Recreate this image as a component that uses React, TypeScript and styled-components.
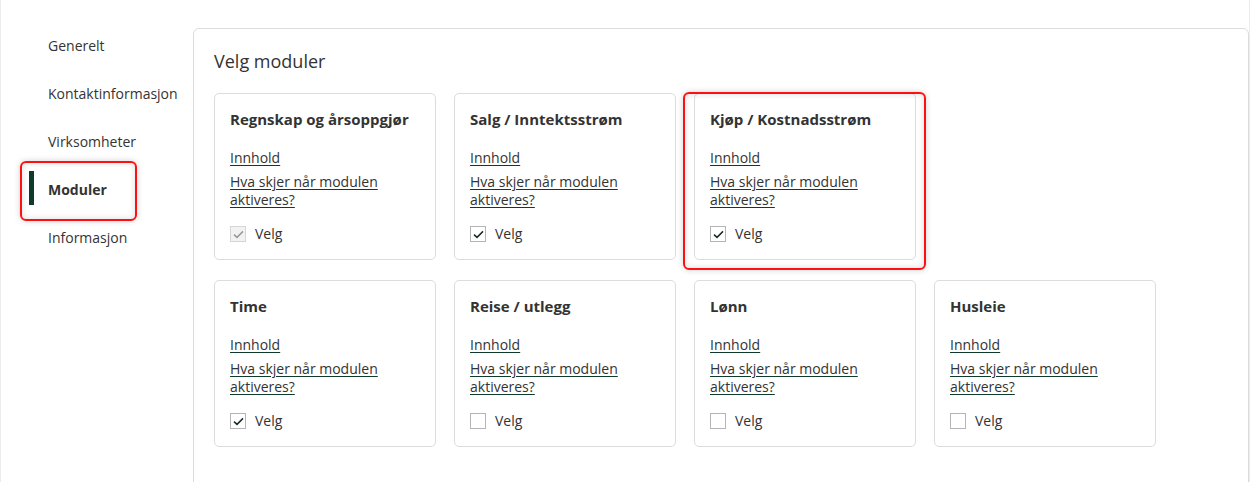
import React from "react";
import styled, { createGlobalStyle, css } from "styled-components";

const Global = createGlobalStyle`
  html, body { margin: 0; padding: 0; background: #fff; }
  body { font-family: "Open Sans", "Noto Sans", Arial, sans-serif; color: #333; overflow: hidden; }
  * { box-sizing: border-box; }
`;

const Shell = styled.div`
  display: flex;
  margin: -6px 0 0 0;
  border: 1px solid #ececec;
  border-radius: 8px;
  height: 540px;
  padding-top: 6px;
`;

const Sidebar = styled.nav`
  width: 192px;
  flex-shrink: 0;
  display: flex;
  flex-direction: column;
  padding-top: 20px;
`;

const NavItem = styled.div<{ $active?: boolean }>`
  position: relative;
  height: 48px;
  display: flex;
  align-items: center;
  padding-left: 47px;
  font-size: 14px;
  color: #333;
  ${(p) =>
    p.$active &&
    css`
      font-weight: 700;
      &::before {
        content: "";
        position: absolute;
        left: 28px;
        top: 6px;
        width: 5px;
        height: 34px;
        background: #0f3a2c;
      }
      &::after {
        content: "";
        position: absolute;
        left: 19px;
        top: -4px;
        width: 113px;
        height: 56px;
        border: 2px solid #ff1010;
        border-radius: 6px;
        box-shadow: 0 0 6px rgba(0, 0, 0, 0.18), inset 0 0 6px rgba(0, 0, 0, 0.14);
      }
    `}
`;

const Panel = styled.main`
  flex: 1;
  margin-top: 27px;
  border: 1px solid #dcdcdc;
  border-radius: 6px;
  padding: 20px 20px 0 20px;
`;

const Title = styled.h2`
  margin: 0 0 20px 0;
  font-size: 18px;
  font-weight: 400;
  line-height: 24px;
  color: #333;
`;

const Rows = styled.div`
  display: flex;
  flex-direction: column;
  gap: 20px;
`;

const Row = styled.div`
  display: grid;
  grid-template-columns: repeat(4, 222px);
  column-gap: 18px;
`;

const Card = styled.div<{ $highlight?: boolean }>`
  position: relative;
  height: 167px;
  border: 1px solid #dcdcdc;
  border-radius: 5px;
  padding: 14px 15px 0 15px;
  display: flex;
  flex-direction: column;
  ${(p) =>
    p.$highlight &&
    css`
      &::after {
        content: "";
        position: absolute;
        left: -12px;
        top: -2px;
        right: -11px;
        bottom: -11px;
        border: 2px solid #ff1010;
        border-radius: 6px;
        box-shadow: 0 0 6px rgba(0, 0, 0, 0.18), inset 0 0 6px rgba(0, 0, 0, 0.14);
        pointer-events: none;
      }
    `}
`;

const CardTitle = styled.div`
  font-size: 15px;
  font-weight: 700;
  line-height: 22px;
  color: #333;
  margin-bottom: 19px;
`;

const Link = styled.a`
  display: block;
  font-size: 14px;
  line-height: 18px;
  color: #333;
  text-decoration: underline;
  text-decoration-color: #0f3a2c;
  text-underline-offset: 2px;
  margin-bottom: 6px;
  cursor: pointer;
`;

const CheckRow = styled.label`
  display: flex;
  align-items: center;
  gap: 9px;
  margin-top: 10px;
  font-size: 14px;
  line-height: 18px;
  color: #333;
`;

const Box = styled.span<{ $disabled?: boolean }>`
  width: 16px;
  height: 16px;
  border: 1px solid ${(p) => (p.$disabled ? "#d6d6d6" : "#b5b5b5")};
  background: ${(p) => (p.$disabled ? "#f2f2f2" : "#fff")};
  display: flex;
  align-items: center;
  justify-content: center;
`;

type Mod = { title: string; checked: boolean; disabled?: boolean; highlight?: boolean };

const rows: Mod[][] = [
  [
    { title: "Regnskap og årsoppgjør", checked: true, disabled: true },
    { title: "Salg / Inntektsstrøm", checked: true },
    { title: "Kjøp / Kostnadsstrøm", checked: true, highlight: true },
  ],
  [
    { title: "Time", checked: true },
    { title: "Reise / utlegg", checked: false },
    { title: "Lønn", checked: false },
    { title: "Husleie", checked: false },
  ],
];

const Check = ({ disabled }: { disabled?: boolean }) => (
  <svg width="11" height="9" viewBox="0 0 11 9">
    <path
      d="M1 4.6 L4 7.4 L10 1.4"
      fill="none"
      stroke={disabled ? "#9a9a9a" : "#1d2b2a"}
      strokeWidth="1.5"
    />
  </svg>
);

export default function App() {
  const nav = ["Generelt", "Kontaktinformasjon", "Virksomheter", "Moduler", "Informasjon"];
  return (
    <>
      <Global />
      <Shell>
        <Sidebar>
          {nav.map((n) => (
            <NavItem key={n} $active={n === "Moduler"}>
              {n}
            </NavItem>
          ))}
        </Sidebar>
        <Panel>
          <Title>Velg moduler</Title>
          <Rows>
            {rows.map((r, i) => (
              <Row key={i}>
                {r.map((m) => (
                  <Card key={m.title} $highlight={m.highlight}>
                    <CardTitle>{m.title}</CardTitle>
                    <Link>Innhold</Link>
                    <Link>
                      Hva skjer når modulen
                      <br />
                      aktiveres?
                    </Link>
                    <CheckRow>
                      <Box $disabled={m.disabled}>{m.checked && <Check disabled={m.disabled} />}</Box>
                      Velg
                    </CheckRow>
                  </Card>
                ))}
              </Row>
            ))}
          </Rows>
        </Panel>
      </Shell>
    </>
  );
}
